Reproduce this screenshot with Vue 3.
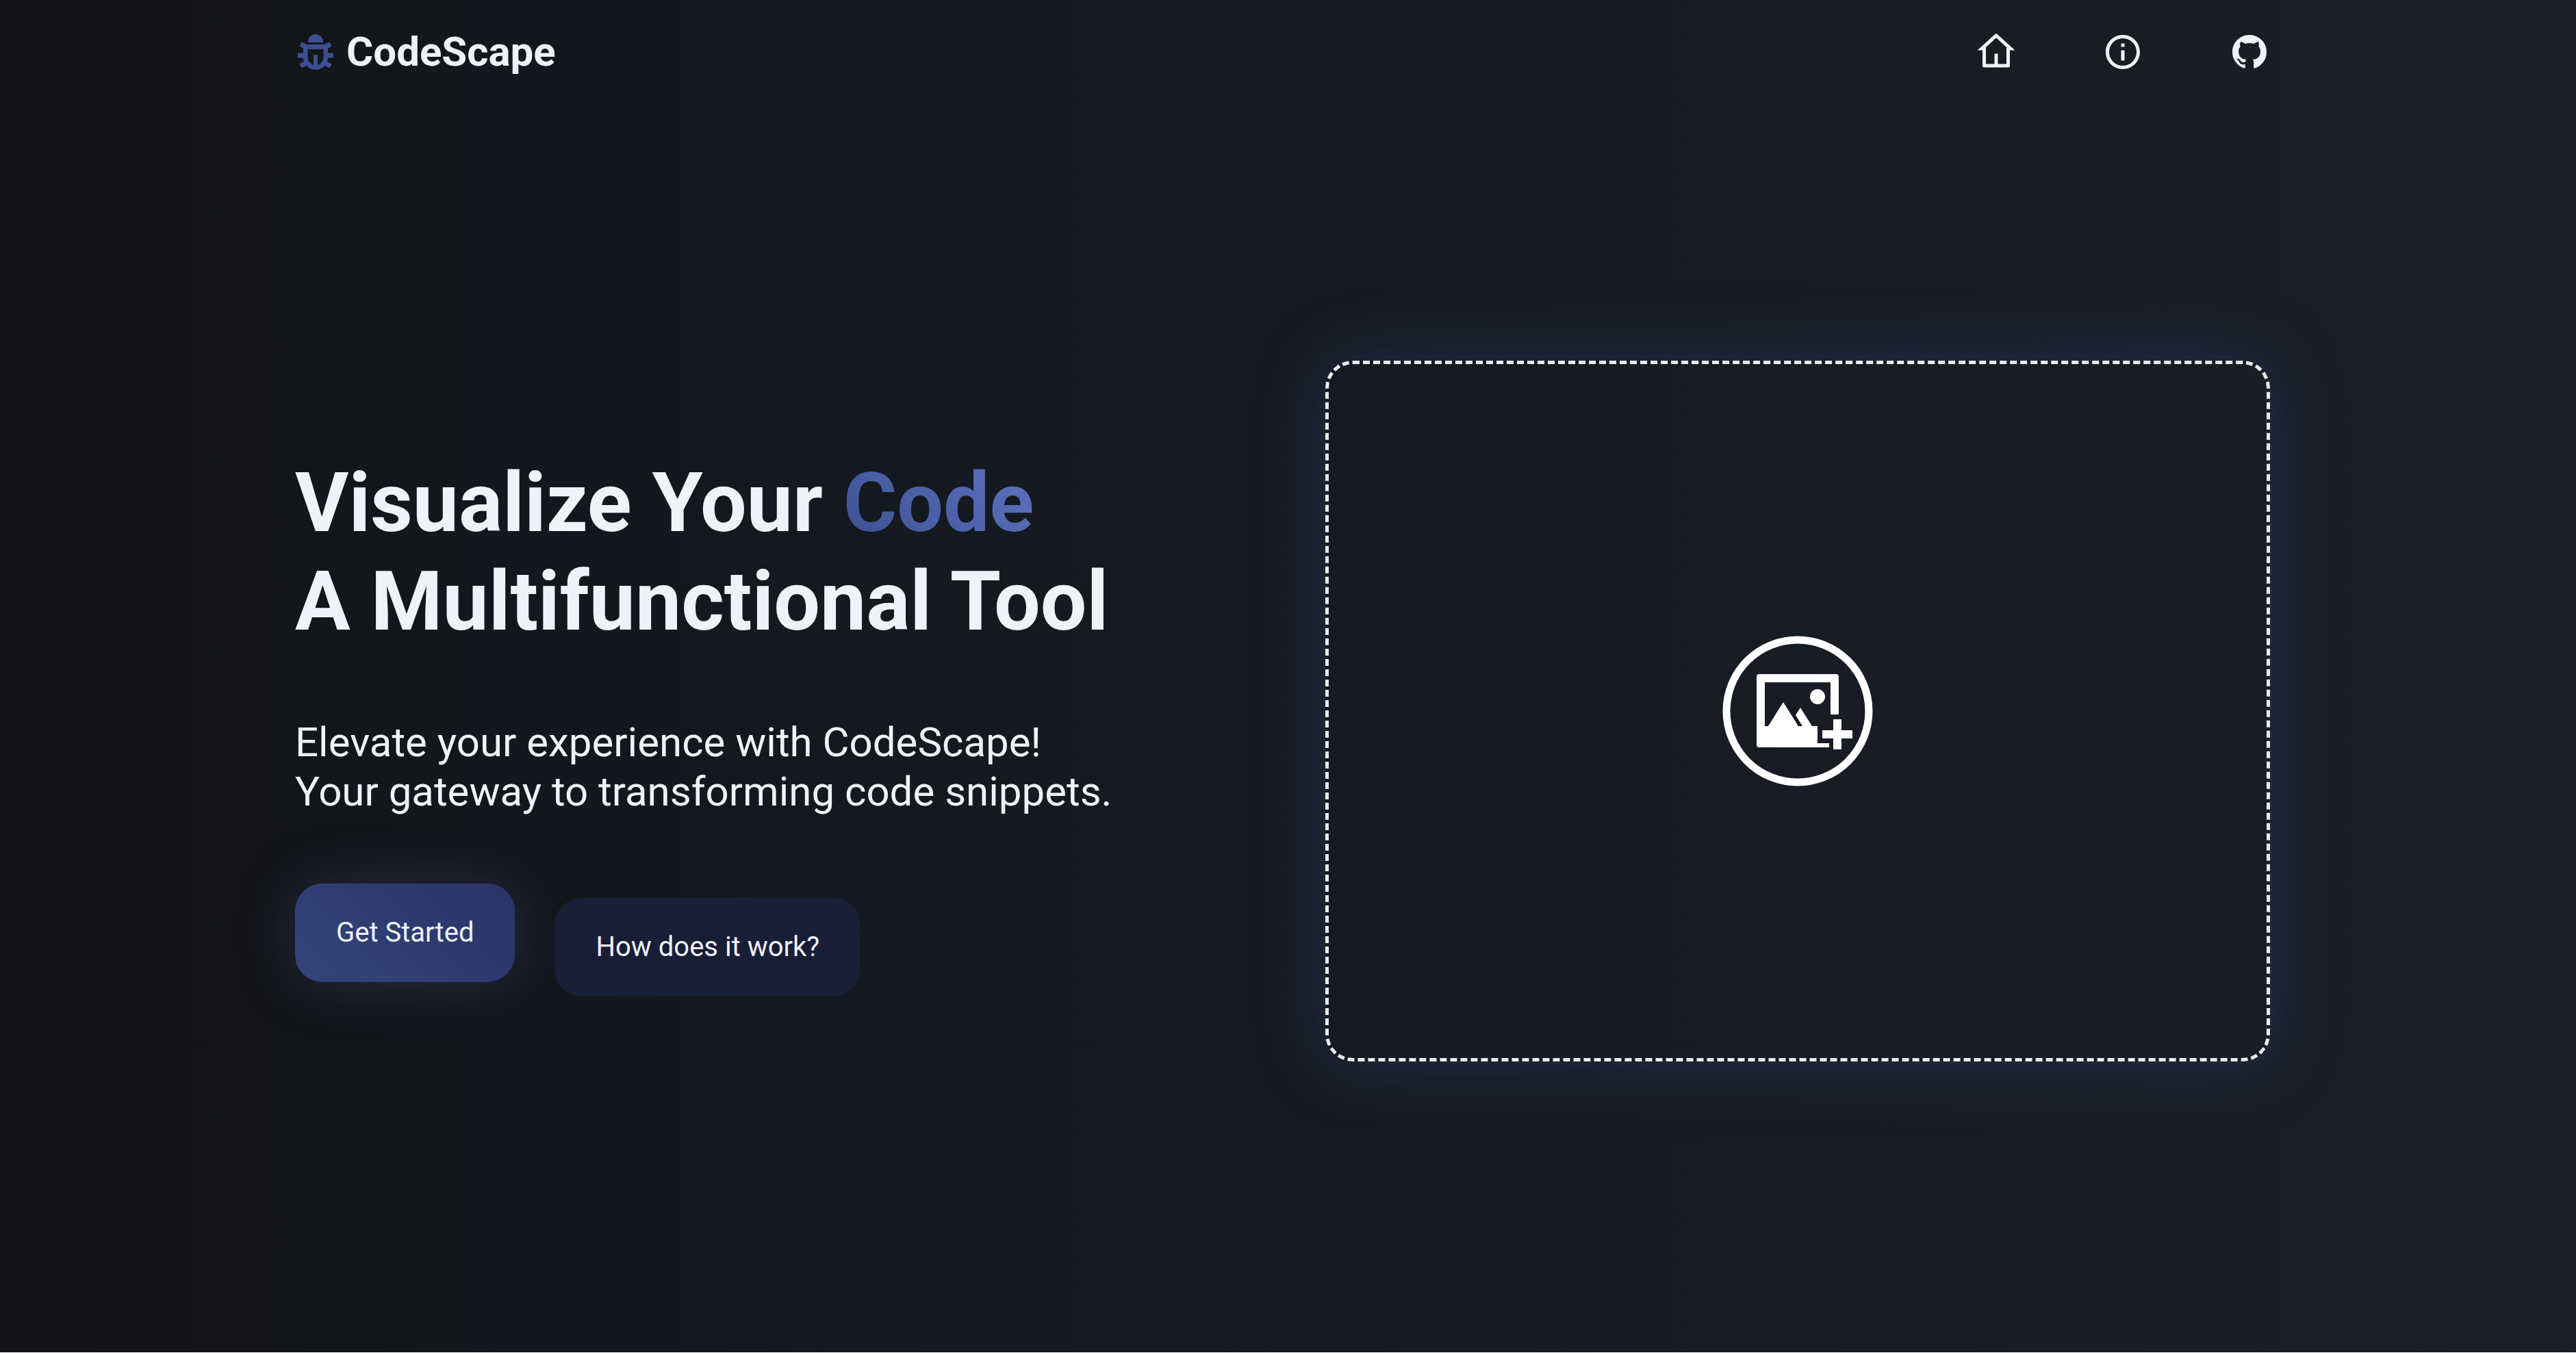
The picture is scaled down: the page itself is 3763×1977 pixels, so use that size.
<script setup>
const links = [
  {
    label: 'Home',
    href: '#home',
    path: 'M19 21H5a1 1 0 0 1-1-1v-9H1L11.33 1.61a1 1 0 0 1 1.34 0L23 11h-3v9a1 1 0 0 1-1 1Zm-6-2h5V9.16L12 3.7 6 9.16V19h5v-6h2v6Z'
  },
  {
    label: 'About',
    href: '#about',
    path: 'M12 22C6.477 22 2 17.523 2 12S6.477 2 12 2s10 4.477 10 10-4.477 10-10 10Zm0-2a8 8 0 1 0 0-16 8 8 0 0 0 0 16ZM11 7h2v2h-2V7Zm0 4h2v6h-2v-6Z'
  },
  {
    label: 'GitHub',
    href: '#github',
    path: 'M12 2C6.475 2 2 6.475 2 12a9.994 9.994 0 0 0 6.838 9.488c.5.087.687-.213.687-.476 0-.237-.013-1.024-.013-1.862-2.512.463-3.162-.612-3.362-1.175-.113-.288-.6-1.175-1.025-1.413-.35-.187-.85-.65-.013-.662.788-.013 1.35.725 1.538 1.025.9 1.512 2.338 1.087 2.912.825.088-.65.35-1.087.638-1.337-2.225-.25-4.55-1.113-4.55-4.938 0-1.088.387-1.987 1.025-2.688-.1-.25-.45-1.275.1-2.65 0 0 .837-.262 2.75 1.026a9.28 9.28 0 0 1 2.5-.338c.85 0 1.7.112 2.5.337 1.912-1.3 2.75-1.024 2.75-1.024.55 1.375.2 2.4.1 2.65.637.7 1.025 1.587 1.025 2.687 0 3.838-2.337 4.688-4.562 4.938.362.312.675.912.675 1.85 0 1.337-.013 2.412-.013 2.75 0 .262.188.574.688.474A10.016 10.016 0 0 0 22 12c0-5.525-4.475-10-10-10Z'
  }
]
</script>

<template>
  <div class="page">
    <header class="header">
      <a class="brand" href="#home">
        <svg class="icon bug" viewBox="0 0 60 60" aria-hidden="true">
          <path d="M19 16V15a11 11 0 0 1 22 0v1Z" />
          <path
            fill-rule="evenodd"
            d="M12 19H48V38a18 18 0 0 1-36 0ZM18.500 26V37C18.500 43 22 47 27 49V34h6v15c5-2 8.500-6 8.500-12V26Z"
          />
          <path
            class="legs"
            d="M17 23L8 18.500M43 23L52 18.500M14 35H4M46 35H56M18 45L8 50.500M42 45L52 50.500"
          />
        </svg>
        <span>CodeScape</span>
      </a>
      <nav class="nav" aria-label="Main">
        <a v-for="link in links" :key="link.label" :href="link.href" :aria-label="link.label">
          <svg class="icon" viewBox="0 0 24 24" aria-hidden="true">
            <path :d="link.path" fill-rule="evenodd" />
          </svg>
        </a>
      </nav>
    </header>

    <main class="hero">
      <section class="intro">
        <h1>Visualize Your <span class="accent">Code</span><br />A Multifunctional Tool</h1>
        <p>Elevate your experience with CodeScape!<br />Your gateway to transforming code snippets.</p>
        <div class="actions">
          <button class="button primary" type="button">Get Started</button>
          <button class="button secondary" type="button">How does it work?</button>
        </div>
      </section>

      <button class="dropzone" type="button" aria-label="Add an image">
        <svg class="add-image" viewBox="0 0 220 220" aria-hidden="true">
          <circle cx="110" cy="110" r="104" />
          <path
            fill-rule="evenodd"
            d="M54 56H166Q170 56 170 60V115H158V68H62V132H67L89 97L111 132H117L107 116L114 105L131 132H139V157H156V163H54Q50 163 50 159V60Q50 56 54 56Z"
          />
          <circle class="sun" cx="139" cy="89" r="11" />
          <path d="M162 122H174V138H190V150H174V166H162V150H146V138H162Z" />
        </svg>
      </button>
    </main>
  </div>
</template>

<style>
body {
  margin: 0;
  background: #ffffff;
}
</style>

<style scoped>
.page {
  box-sizing: border-box;
  min-height: calc(100vh - 1px);
  display: flex;
  flex-direction: column;
  padding: 0 447px 50px 431px;
  background: linear-gradient(90deg, #131417, #14181f 30%, #1a1e28);
  color: #eff2fb;
  font-family: Roboto, sans-serif;
}

.header {
  display: flex;
  align-items: center;
  justify-content: space-between;
  padding: 40px 0;
}

.brand {
  display: flex;
  align-items: center;
  gap: 15px;
  color: inherit;
  font-size: 60px;
  font-weight: 700;
  line-height: 72px;
  text-decoration: none;
}

.icon {
  display: block;
  width: 60px;
  height: 60px;
  fill: currentColor;
}

.bug {
  color: #3d4f8f;
}

.legs {
  fill: none;
  stroke: currentColor;
  stroke-width: 7;
}

.nav {
  display: flex;
  gap: 125px;
}

.nav a {
  color: inherit;
}

.hero {
  flex: 1;
  display: grid;
  grid-template-columns: 1fr 1fr;
  align-items: center;
  gap: 125px;
}

.intro {
  display: flex;
  flex-direction: column;
  gap: 98px;
  padding-top: 40px;
}

h1 {
  margin: 0;
  font-size: 120px;
  font-weight: 700;
  line-height: 144px;
}

.accent {
  background: linear-gradient(45deg, #3d4f8f, #5c74c4);
  background-clip: text;
  color: transparent;
}

p {
  margin: 0;
  font-size: 60px;
  line-height: 72px;
}

.actions {
  display: flex;
  align-items: flex-start;
  gap: 58px;
}

.button {
  padding: 48px 60px;
  border: 0;
  border-radius: 40px;
  color: inherit;
  font: inherit;
  font-size: 40px;
  line-height: 48px;
  cursor: pointer;
}

.primary {
  background: linear-gradient(45deg, #34447a, #283468);
  box-shadow: 0 0 80px rgba(70, 82, 130, 0.35);
}

.secondary {
  margin-top: 21px;
  background: #191e37;
}

.dropzone {
  box-sizing: border-box;
  width: 100%;
  height: 1024px;
  display: flex;
  align-items: center;
  justify-content: center;
  padding: 0;
  border: 5px dashed #ebebeb;
  border-radius: 40px;
  background: transparent;
  box-shadow: 0 0 100px rgba(61, 79, 143, 0.4);
  cursor: pointer;
}

.add-image {
  width: 220px;
  height: 220px;
  fill: #ffffff;
}

.add-image circle:not(.sun) {
  fill: none;
  stroke: #ffffff;
  stroke-width: 11;
}
</style>
